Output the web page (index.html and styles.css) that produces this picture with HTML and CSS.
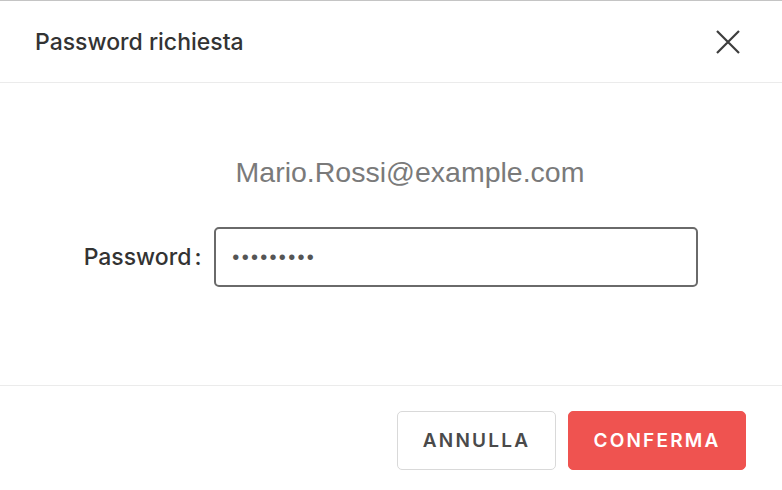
FILE: index.html
```html
<!DOCTYPE html>
<html lang="it">
<head>
	<meta charset="UTF-8">
	<meta name="viewport" content="width=device-width, initial-scale=1.0">
	<title>Password richiesta</title>
	<link rel="stylesheet" href="styles.css">
</head>
<body>
	<div class="dialog">
		<div class="dialog-header">
			<h2 class="dialog-title">Password richiesta</h2>
			<button type="button" class="close-btn" aria-label="Chiudi">
				<svg width="24" height="24" viewBox="0 0 24 24">
					<path d="M1 1 L23 23 M23 1 L1 23" stroke="#3d3d3d" stroke-width="2.2" fill="none" />
				</svg>
			</button>
		</div>
		<div class="dialog-body">
			<p class="account">Mario.Rossi@example.com</p>
			<form class="password-row" onsubmit="return false">
				<label for="password" class="field-label">Password<span class="colon">:</span></label>
				<input type="password" id="password" value="123456789" />
			</form>
		</div>
		<div class="dialog-footer">
			<button type="button" class="btn btn-cancel">Annulla</button>
			<button type="button" class="btn btn-confirm">Conferma</button>
		</div>
	</div>
</body>
</html>
```

FILE: styles.css
```css
html, body {
	margin: 0;
	padding: 0;
	background: #fff;
}
body {
	font-family: Inter, "Noto Sans", sans-serif;
	color: #333;
}
.dialog {
	height: 490px;
	box-sizing: border-box;
	border-top: 1px solid #c4c4c4;
	display: flex;
	flex-direction: column;
}
.dialog-header {
	height: 82px;
	box-sizing: border-box;
	display: flex;
	align-items: center;
	justify-content: space-between;
	padding: 0 42px 0 35px;
	border-bottom: 1px solid #ebebeb;
}
.dialog-title {
	margin: 0;
	font-size: 23px;
	font-weight: 500;
	color: #333;
}
.close-btn {
	background: none;
	border: none;
	padding: 0;
	width: 24px;
	height: 24px;
	cursor: pointer;
	display: block;
}
.close-btn svg {
	display: block;
}
.dialog-body {
	height: 303px;
	box-sizing: border-box;
	padding-top: 73px;
	border-bottom: 1px solid #ebebeb;
}
.account {
	margin: 0;
	padding-left: 38px;
	text-align: center;
	font-family: "Liberation Sans", Arial, sans-serif;
	font-size: 28.5px;
	line-height: 32px;
	color: #7a7a7a;
}
.password-row {
	margin: 39px 0 0 0;
	display: flex;
	align-items: center;
	justify-content: center;
	gap: 13px;
}
.field-label {
	font-size: 23px;
	font-weight: 500;
	color: #333;
}
.field-label .colon {
	margin-left: 3px;
}
#password {
	width: 484px;
	height: 60px;
	box-sizing: border-box;
	border: 2px solid #6a6a6a;
	border-radius: 5px;
	padding: 0 16px;
	font-family: "Liberation Sans", Arial, sans-serif;
	font-size: 20px;
	letter-spacing: 2.3px;
	color: #555;
	outline: none;
}
.dialog-footer {
	flex: 1;
	display: flex;
	justify-content: flex-end;
	align-items: flex-start;
	gap: 12px;
	padding: 25px 36px 0 0;
}
.btn {
	height: 59px;
	box-sizing: border-box;
	border-radius: 5px;
	font-family: Inter, "Noto Sans", sans-serif;
	font-size: 19px;
	font-weight: 600;
	letter-spacing: 2.2px;
	text-transform: uppercase;
	cursor: pointer;
}
.btn-cancel {
	width: 159px;
	background: #fff;
	border: 1px solid #d9d9d9;
	color: #4a4a4a;
}
.btn-confirm {
	width: 178px;
	background: #ef5350;
	border: 1px solid #ef5350;
	color: #fff;
}
```
